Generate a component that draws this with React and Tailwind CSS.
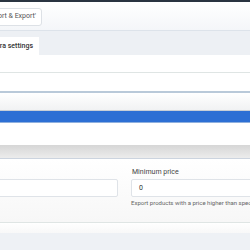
export default function App() {
  return (
    <div className="w-[250px] h-[250px] overflow-hidden bg-white flex flex-col" style={{ fontFamily: "Roboto, 'Liberation Sans', sans-serif" }}>
      <div className="h-[2px] bg-[#2a3441] shrink-0" />
      <div className="h-[29px] shrink-0 bg-gradient-to-b from-white to-[#f4f6f9] border-b border-[#dde3ea] flex items-center">
        <div className="-ml-[20px] mt-[1px] h-[18px] px-[5px] border border-[#dde1e6] rounded-[3px] bg-white flex items-center text-[7px] text-[#555] whitespace-nowrap">
          Import &amp; Export'
        </div>
      </div>
      <div className="h-[24px] shrink-0 bg-[#edf0f4] flex items-end">
        <div className="-ml-[20px] h-[18px] w-[59px] bg-white flex items-center justify-end pr-[6px] text-[7px] font-medium text-[#333] whitespace-nowrap">
          Extra settings
        </div>
      </div>
      <div className="h-[18px] shrink-0 bg-white border-b border-[#dfe5e4]" />
      <div className="h-[20px] shrink-0 bg-white border-b-2 border-[#b9c9d9]" />
      <div className="h-[18px] shrink-0 bg-gradient-to-b from-white to-[#f1f2f3] border-b border-[#c9cfd6]" />
      <div className="h-[12px] shrink-0 bg-[#2d6fd4] border-b border-[#8fb0de]" />
      <div className="h-[22px] shrink-0 bg-white" />
      <div className="h-[14px] shrink-0 bg-gradient-to-b from-[#d6d6d6] to-[#ececec] border-b border-[#ccd4df]" />
      <div className="h-[64px] shrink-0 bg-gradient-to-b from-white to-[#f7f7f7] border-b border-[#dfe5e4] flex gap-[13px]">
        <div className="w-[118px] shrink-0 pt-[20px]">
          <div className="h-[18px] border border-[#dfe3e8] rounded-[2px] bg-white -ml-[4px]" />
        </div>
        <div className="flex-1 flex flex-col pt-[8px] whitespace-nowrap">
          <div className="text-[7px] text-[#444] leading-[10px] pl-[1px]">Minimum price</div>
          <div className="mt-[2px] h-[18px] border border-[#dfe3e8] rounded-[2px] bg-white flex items-center pl-[7px] text-[7px] text-[#333] -mr-[10px]">0</div>
          <div className="mt-[2px] text-[6px] text-[#666] leading-[8px]">Export products with a price higher than specified</div>
        </div>
      </div>
      <div className="h-[10px] shrink-0 bg-gradient-to-b from-white to-[#f8f8f8]" />
      <div className="flex-1 bg-[#eef1f5]" />
    </div>
  );
}
